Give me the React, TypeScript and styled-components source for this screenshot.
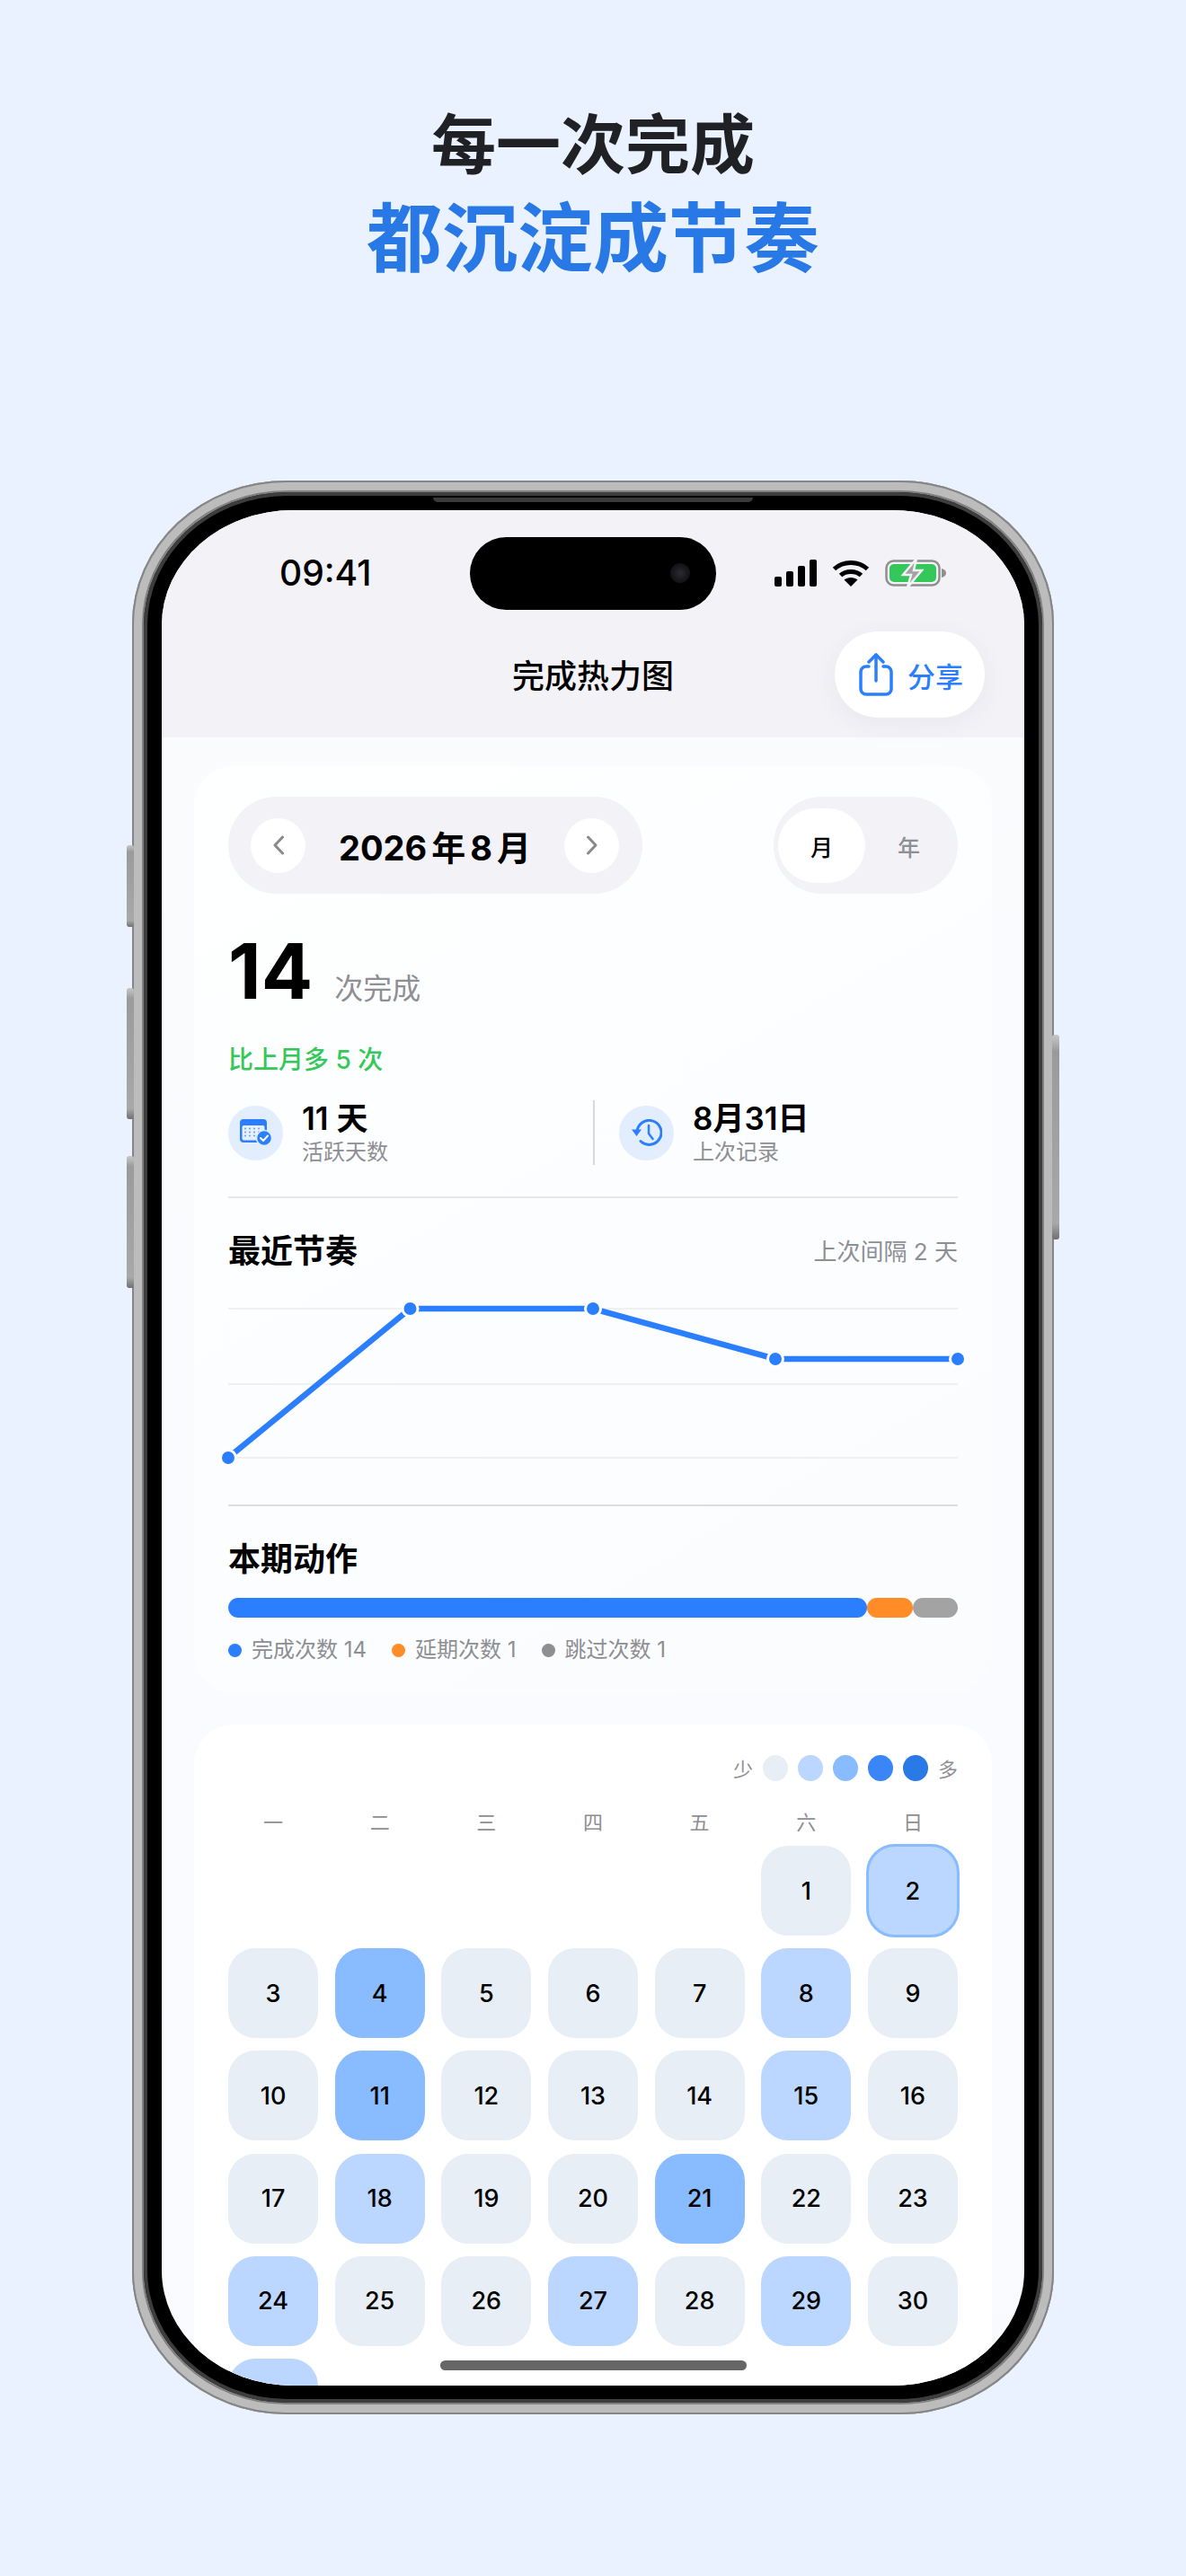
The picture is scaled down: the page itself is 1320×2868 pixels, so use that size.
import styled, { createGlobalStyle } from "styled-components";

const GlobalStyle = createGlobalStyle`
    html, body {
        margin: 0;
        padding: 0;
        background: #eaf2ff;
    }
    * {
        box-sizing: border-box;
    }
`;

const FONT = `Inter, "Noto Sans CJK SC", sans-serif`;
const CJK = `"Noto Sans CJK SC", Inter, sans-serif`;
const BLUE = "#2b7fff";

const Page = styled.div`
    width: 1320px;
    height: 2868px;
    overflow: hidden;
    background: #eaf2ff;
    font-family: ${FONT};
    display: flex;
    flex-direction: column;
    align-items: center;
    padding-top: 109px;
`;

const Headline = styled.h1`
    margin: 0;
    font-family: ${CJK};
    font-size: 72px;
    line-height: 94px;
    font-weight: 700;
    color: #202124;
    text-align: center;
`;

const HeadlineAccent = styled.h2`
    margin: 1px 0 0;
    font-family: ${CJK};
    font-size: 84px;
    line-height: 112px;
    font-weight: 700;
    color: #2878e6;
    text-align: center;
`;

const PhoneFrame = styled.div`
    position: relative;
    margin-top: 219px;
    width: 1026px;
    height: 2153px;
    padding: 13px;
    border-radius: 172px / 160px;
    background: #c6c6c6;
    box-shadow:
        inset 0 0 0 2px #858585,
        inset 0 0 0 11px #bcbcbc,
        inset 0 0 0 13px #808080;
`;

const SideButton = styled.div<{ $top: number; $height: number; $right?: boolean }>`
    position: absolute;
    top: ${p => p.$top}px;
    height: ${p => p.$height}px;
    width: 8px;
    ${p => (p.$right ? "right: -6px;" : "left: -6px;")}
    border-radius: 3px;
    background: linear-gradient(180deg, #c8c8c8, #9a9a9a 8%, #a8a8a8 92%, #707070);
`;

const Bezel = styled.div`
    position: relative;
    width: 100%;
    height: 100%;
    padding: 20px 20px 19px;
    border-radius: 160px / 148px;
    background: #000;
    box-shadow: inset 0 0 0 4px #3d3d3d;
`;

const TopNotch = styled.div`
    position: absolute;
    top: 6px;
    left: 322px;
    width: 356px;
    height: 5px;
    border-radius: 0 0 6px 6px;
    background: #3a3a3a;
`;

const Screen = styled.div`
    position: relative;
    width: 100%;
    height: 100%;
    overflow: hidden;
    border-radius: 146px / 128px;
    background: linear-gradient(160deg, #fbfcfe, #f8fafd);
    display: flex;
    flex-direction: column;
`;

const TopArea = styled.div`
    position: relative;
    flex: none;
    height: 253px;
    background: #f2f2f7;
`;

const StatusBar = styled.div`
    height: 122px;
    padding: 46px 87px 0 131px;
    display: flex;
    justify-content: space-between;
    align-items: flex-start;
`;

const Clock = styled.span`
    font-size: 39px;
    line-height: 48px;
    font-weight: 500;
    color: #000;
`;

const StatusIcons = styled.div`
    display: flex;
    align-items: center;
    gap: 17px;
    padding-top: 8px;
`;

const Island = styled.div`
    position: absolute;
    top: 30px;
    left: 343px;
    width: 274px;
    height: 81px;
    border-radius: 41px;
    background: #000;
`;

const Lens = styled.div`
    position: absolute;
    top: 29px;
    right: 29px;
    width: 22px;
    height: 22px;
    border-radius: 50%;
    background: radial-gradient(circle, #2b2b33 0, #1a1a1e 45%, #0a0a0a 100%);
`;

const NavTitle = styled.div`
    font-family: ${CJK};
    font-size: 36px;
    line-height: 50px;
    font-weight: 500;
    color: #000;
    text-align: center;
    margin-top: 35px;
`;

const ShareButton = styled.button`
    position: absolute;
    top: 135px;
    left: 749px;
    width: 167px;
    height: 96px;
    border: none;
    border-radius: 48px;
    background: #fff;
    box-shadow: 0 6px 30px rgba(60, 70, 90, 0.06);
    display: flex;
    align-items: center;
    gap: 16px;
    padding: 0 0 0 27px;
    font-family: ${CJK};
    font-size: 31px;
    font-weight: 500;
    color: ${BLUE};
`;

const Body = styled.div`
    padding: 32px 36px 0;
    display: flex;
    flex-direction: column;
    gap: 35px;
`;

const Card = styled.section<{ $plain?: boolean }>`
    flex: none;
    border-radius: 44px;
    padding: 34px 38px 0;
    background: ${p => (p.$plain ? "#fff" : "linear-gradient(150deg, #feffff, #fafcfe)")};
`;

const TopRow = styled.div`
    display: flex;
    justify-content: space-between;
`;

const DatePill = styled.div`
    width: 461px;
    height: 108px;
    border-radius: 54px;
    background: #f2f2f7;
    padding: 0 26px 0 25px;
    display: flex;
    align-items: center;
    justify-content: space-between;
`;

const RoundButton = styled.button`
    width: 61px;
    height: 61px;
    padding: 0;
    border: none;
    border-radius: 50%;
    background: #fff;
    display: flex;
    align-items: center;
    justify-content: center;
`;

const DateText = styled.span`
    font-size: 38px;
    font-weight: 700;
    color: #000;
    word-spacing: -4px;
`;

const RangeToggle = styled.div`
    width: 205px;
    height: 108px;
    border-radius: 54px;
    background: #f2f2f7;
    padding: 13px 5px;
    display: flex;
`;

const RangeOption = styled.div<{ $active?: boolean }>`
    width: 97px;
    height: 83px;
    border-radius: 42px;
    background: ${p => (p.$active ? "#fff" : "transparent")};
    color: ${p => (p.$active ? "#000" : "#8e8e93")};
    font-family: ${CJK};
    font-size: 25px;
    font-weight: 500;
    display: flex;
    align-items: center;
    justify-content: center;
`;

const SummaryRow = styled.div`
    margin-top: 47px;
    height: 80px;
    display: flex;
    align-items: baseline;
    gap: 24px;
`;

const BigNumber = styled.span`
    font-size: 85px;
    line-height: 80px;
    font-weight: 700;
    color: #000;
`;

const SummaryUnit = styled.span`
    font-family: ${CJK};
    font-size: 32px;
    color: #8e8e93;
`;

const Trend = styled.div`
    margin-top: 38px;
    font-size: 28px;
    line-height: 40px;
    font-weight: 500;
    color: #34c759;
`;

const StatRow = styled.div`
    margin-top: 25px;
    padding-bottom: 35px;
    border-bottom: 2px solid #e6e7eb;
    display: flex;
`;

const Stat = styled.div<{ $divided?: boolean }>`
    flex: 0 0 406px;
    height: 72px;
    display: flex;
    align-items: center;
    gap: 21px;
    ${p => (p.$divided ? "border-left: 2px solid #d8d9dd; padding-left: 27px;" : "")}
`;

const StatIcon = styled.div`
    flex: none;
    width: 61px;
    height: 61px;
    border-radius: 50%;
    background: #e2edfe;
    display: flex;
    align-items: center;
    justify-content: center;
`;

const StatValue = styled.div`
    font-size: 35px;
    line-height: 40px;
    font-weight: 600;
    color: #000;
`;

const StatLabel = styled.div`
    font-family: ${CJK};
    font-size: 24px;
    line-height: 32px;
    color: #8e8e93;
`;

const SectionHead = styled.div<{ $gap: number }>`
    margin-top: ${p => p.$gap}px;
    display: flex;
    justify-content: space-between;
    align-items: center;
`;

const SectionTitle = styled.h3`
    margin: 0;
    font-family: ${CJK};
    font-size: 36px;
    line-height: 50px;
    font-weight: 700;
    color: #000;
`;

const SectionNote = styled.span`
    margin-top: 8px;
    font-size: 26px;
    line-height: 36px;
    color: #8e8e93;
    font-family: ${FONT};
`;

const ChartBox = styled.div`
    margin-top: 42px;
    padding-bottom: 52px;
    border-bottom: 2px solid #dcdde2;
`;

const ChartSvg = styled.svg`
    display: block;
    overflow: visible;
`;

const ActionBar = styled.div`
    margin-top: 21px;
    height: 22px;
    display: flex;
`;

const ActionPart = styled.div<{ $width: number; $color: string }>`
    width: ${p => p.$width}px;
    border-radius: 11px;
    background: ${p => p.$color};
`;

const ActionLegend = styled.div`
    margin-top: 18px;
    padding-bottom: 30px;
    display: flex;
    gap: 28px;
`;

const LegendItem = styled.div`
    display: flex;
    align-items: center;
    gap: 11px;
    font-size: 24px;
    line-height: 36px;
    color: #8e8e93;
`;

const LegendDot = styled.span<{ $color: string }>`
    width: 15px;
    height: 15px;
    border-radius: 50%;
    background: ${p => p.$color};
`;

const ScaleRow = styled.div`
    display: flex;
    justify-content: flex-end;
    align-items: center;
    gap: 11px;
    font-family: ${CJK};
    font-size: 22px;
    line-height: 29px;
    color: #8e8e93;
`;

const ScaleDot = styled.span<{ $color: string }>`
    width: 28px;
    height: 29px;
    border-radius: 50%;
    background: ${p => p.$color};
`;

const WeekRow = styled.div`
    margin-top: 28px;
    display: grid;
    grid-template-columns: repeat(7, 100px);
    column-gap: 18.67px;
`;

const WeekDay = styled.span`
    font-family: ${CJK};
    font-size: 22px;
    line-height: 32px;
    color: #8e8e93;
    text-align: center;
`;

const DayGrid = styled.div`
    margin-top: 12px;
    display: grid;
    grid-template-columns: repeat(7, 100px);
    grid-auto-rows: 100px;
    gap: 14.2px 18.67px;
`;

const LEVELS = ["#e8eef6", "#bbd7ff", "#88bbff"];

const DayCell = styled.div<{ $level: number; $today?: boolean }>`
    position: relative;
    border-radius: 30px;
    background: ${p => LEVELS[p.$level]};
    font-size: 27px;
    font-weight: 500;
    color: #000;
    display: flex;
    align-items: center;
    justify-content: center;
    ${p => (p.$today ? "outline: 3px solid #88bbff; outline-offset: -1px;" : "")}
`;

const HomeIndicator = styled.div`
    position: absolute;
    left: 310px;
    bottom: 17px;
    width: 341px;
    height: 11px;
    border-radius: 6px;
    background: #666;
`;

const LEVEL_ONE = [2, 8, 15, 18, 24, 27, 29, 31];
const LEVEL_TWO = [4, 11, 21];
const WEEK = ["一", "二", "三", "四", "五", "六", "日"];
const SCALE = ["#e8eef6", "#bbd7ff", "#88bbff", "#3b86f7", "#2979e6"];
const POINTS = [
    [0, 166],
    [202.5, 0],
    [406, 0],
    [609, 56],
    [812, 56],
];

function SignalIcon() {
    return (
        <svg width="47" height="30" viewBox="0 0 47 30">
            <rect x="0" y="19" width="8" height="11" rx="2" fill="#000" />
            <rect x="13" y="13" width="8" height="17" rx="2" fill="#000" />
            <rect x="26" y="7" width="8" height="23" rx="2" fill="#000" />
            <rect x="39" y="0" width="8" height="30" rx="2" fill="#000" />
        </svg>
    );
}

function WifiIcon() {
    return (
        <svg width="42" height="30" viewBox="0 0 42 30" fill="none">
            <path d="M2.5 10.5C12.5 1 29.5 1 39.5 10.5" stroke="#000" strokeWidth="5" />
            <path d="M9.5 17.5C15.5 12 26.5 12 32.5 17.5" stroke="#000" strokeWidth="5" />
            <path d="M21 30L13.5 22.5C17.5 19 24.5 19 28.5 22.5Z" fill="#000" />
        </svg>
    );
}

function BatteryIcon() {
    return (
        <svg width="68" height="32" viewBox="0 0 68 32" fill="none">
            <rect x="1.5" y="2.5" width="59" height="27" rx="8" stroke="#8f8f8f" strokeWidth="2.5" />
            <rect x="5" y="6" width="52" height="20" rx="5" fill="#34c759" />
            <path d="M63 11c3 .5 5 2.5 5 5s-2 4.500-5 5Z" fill="#8f8f8f" />
            <path d="M35 0 20 18h9l-4 14 16-19h-9l3-13Z" fill="#a3a3a3" stroke="#f2f2f7" strokeWidth="2.500" />
        </svg>
    );
}

function ShareIcon() {
    return (
        <svg width="38" height="48" viewBox="0 0 38 48" fill="none" stroke={BLUE} strokeWidth="3.5" strokeLinecap="round" strokeLinejoin="round">
            <path d="M11 15H8a6 6 0 0 0-6 6v19a6 6 0 0 0 6 6h22a6 6 0 0 0 6-6V21a6 6 0 0 0-6-6h-3" />
            <path d="M19 31V2" />
            <path d="M11 10l8-8 8 8" />
        </svg>
    );
}

function CalendarCheckIcon() {
    return (
        <svg width="36" height="30" viewBox="0 0 36 30" fill="none">
            <rect x="0" y="0" width="30" height="26" rx="4" fill={BLUE} />
            <rect x="2.500" y="7" width="25" height="16.500" rx="2" fill="#e8f0fe" />
            {[6, 11, 16, 21].flatMap(x =>
                [10.5, 14.5, 18.5].map(y => <circle key={`${x}-${y}`} cx={x} cy={y} r="1.100" fill="#6ea5fb" />),
            )}
            <circle cx="27" cy="21" r="8.500" fill={BLUE} stroke="#e2edfe" strokeWidth="1.500" />
            <path d="M23 21l3 3 5-5.500" stroke="#fff" strokeWidth="2" strokeLinecap="round" strokeLinejoin="round" />
        </svg>
    );
}

function HistoryIcon() {
    return (
        <svg width="34" height="30" viewBox="0 0 34 30" fill="none">
            <path d="M6 15a13.500 13.500 0 1 1 4 9.500" stroke={BLUE} strokeWidth="3" strokeLinecap="round" />
            <path d="M0 11.500h11L5.500 19Z" fill={BLUE} />
            <path d="M19 7v9l4.500 6" stroke={BLUE} strokeWidth="2.500" strokeLinecap="round" strokeLinejoin="round" />
        </svg>
    );
}

function Chevron({ flip }: { flip?: boolean }) {
    return (
        <svg width="14" height="22" viewBox="0 0 14 22" fill="none" style={flip ? { transform: "scaleX(-1)" } : undefined}>
            <path d="M11.500 2 3 11l8.500 9" stroke="#8a8a8e" strokeWidth="3" strokeLinecap="round" strokeLinejoin="round" />
        </svg>
    );
}

function RhythmChart() {
    const line = POINTS.map(p => p.join(",")).join(" ");
    return (
        <ChartSvg width="812" height="166" viewBox="0 0 812 166">
            {[0, 84, 166].map(y => (
                <line key={y} x1="0" x2="812" y1={y} y2={y} stroke="#eff0f4" strokeWidth="2" />
            ))}
            <polyline points={line} fill="none" stroke={BLUE} strokeWidth="6.500" />
            {POINTS.map(([x, y]) => (
                <circle key={x} cx={x} cy={y} r="8.500" fill={BLUE} stroke="#fff" strokeWidth="3" />
            ))}
        </ChartSvg>
    );
}

function dayLevel(day: number) {
    if (LEVEL_TWO.includes(day)) return 2;
    if (LEVEL_ONE.includes(day)) return 1;
    return 0;
}

export default function App() {
    return (
        <Page>
            <GlobalStyle />
            <Headline>每一次完成</Headline>
            <HeadlineAccent>都沉淀成节奏</HeadlineAccent>
            <PhoneFrame>
                <SideButton $top={406} $height={91} />
                <SideButton $top={565} $height={146} />
                <SideButton $top={752} $height={147} />
                <SideButton $right $top={617} $height={228} />
                <Bezel>
                    <TopNotch />
                    <Screen>
                        <TopArea>
                            <StatusBar>
                                <Clock>09:41</Clock>
                                <StatusIcons>
                                    <SignalIcon />
                                    <WifiIcon />
                                    <BatteryIcon />
                                </StatusIcons>
                            </StatusBar>
                            <Island>
                                <Lens />
                            </Island>
                            <NavTitle>完成热力图</NavTitle>
                            <ShareButton>
                                <ShareIcon />
                                分享
                            </ShareButton>
                        </TopArea>
                        <Body>
                            <Card>
                                <TopRow>
                                    <DatePill>
                                        <RoundButton>
                                            <Chevron />
                                        </RoundButton>
                                        <DateText>2026 年 8 月</DateText>
                                        <RoundButton>
                                            <Chevron flip />
                                        </RoundButton>
                                    </DatePill>
                                    <RangeToggle>
                                        <RangeOption $active>月</RangeOption>
                                        <RangeOption>年</RangeOption>
                                    </RangeToggle>
                                </TopRow>
                                <SummaryRow>
                                    <BigNumber>14</BigNumber>
                                    <SummaryUnit>次完成</SummaryUnit>
                                </SummaryRow>
                                <Trend>比上月多 5 次</Trend>
                                <StatRow>
                                    <Stat>
                                        <StatIcon>
                                            <CalendarCheckIcon />
                                        </StatIcon>
                                        <div>
                                            <StatValue>11 天</StatValue>
                                            <StatLabel>活跃天数</StatLabel>
                                        </div>
                                    </Stat>
                                    <Stat $divided>
                                        <StatIcon>
                                            <HistoryIcon />
                                        </StatIcon>
                                        <div>
                                            <StatValue>8月31日</StatValue>
                                            <StatLabel>上次记录</StatLabel>
                                        </div>
                                    </Stat>
                                </StatRow>
                                <SectionHead $gap={31}>
                                    <SectionTitle>最近节奏</SectionTitle>
                                    <SectionNote>上次间隔 2 天</SectionNote>
                                </SectionHead>
                                <ChartBox>
                                    <RhythmChart />
                                </ChartBox>
                                <SectionHead $gap={31}>
                                    <SectionTitle>本期动作</SectionTitle>
                                </SectionHead>
                                <ActionBar>
                                    <ActionPart $width={711} $color={BLUE} />
                                    <ActionPart $width={51} $color="#ff8c26" />
                                    <ActionPart $width={50} $color="#a3a3a3" />
                                </ActionBar>
                                <ActionLegend>
                                    <LegendItem>
                                        <LegendDot $color={BLUE} />
                                        完成次数 14
                                    </LegendItem>
                                    <LegendItem>
                                        <LegendDot $color="#ff8c26" />
                                        延期次数 1
                                    </LegendItem>
                                    <LegendItem>
                                        <LegendDot $color="#8e8e93" />
                                        跳过次数 1
                                    </LegendItem>
                                </ActionLegend>
                            </Card>
                            <Card $plain>
                                <ScaleRow>
                                    少
                                    {SCALE.map(color => (
                                        <ScaleDot key={color} $color={color} />
                                    ))}
                                    多
                                </ScaleRow>
                                <WeekRow>
                                    {WEEK.map(day => (
                                        <WeekDay key={day}>{day}</WeekDay>
                                    ))}
                                </WeekRow>
                                <DayGrid>
                                    {[0, 1, 2, 3, 4].map(n => (
                                        <span key={n} />
                                    ))}
                                    {Array.from({ length: 31 }, (_, i) => i + 1).map(day => (
                                        <DayCell key={day} $level={dayLevel(day)} $today={day === 2}>
                                            {day === 31 ? "" : day}
                                        </DayCell>
                                    ))}
                                </DayGrid>
                            </Card>
                        </Body>
                        <HomeIndicator />
                    </Screen>
                </Bezel>
            </PhoneFrame>
        </Page>
    );
}
